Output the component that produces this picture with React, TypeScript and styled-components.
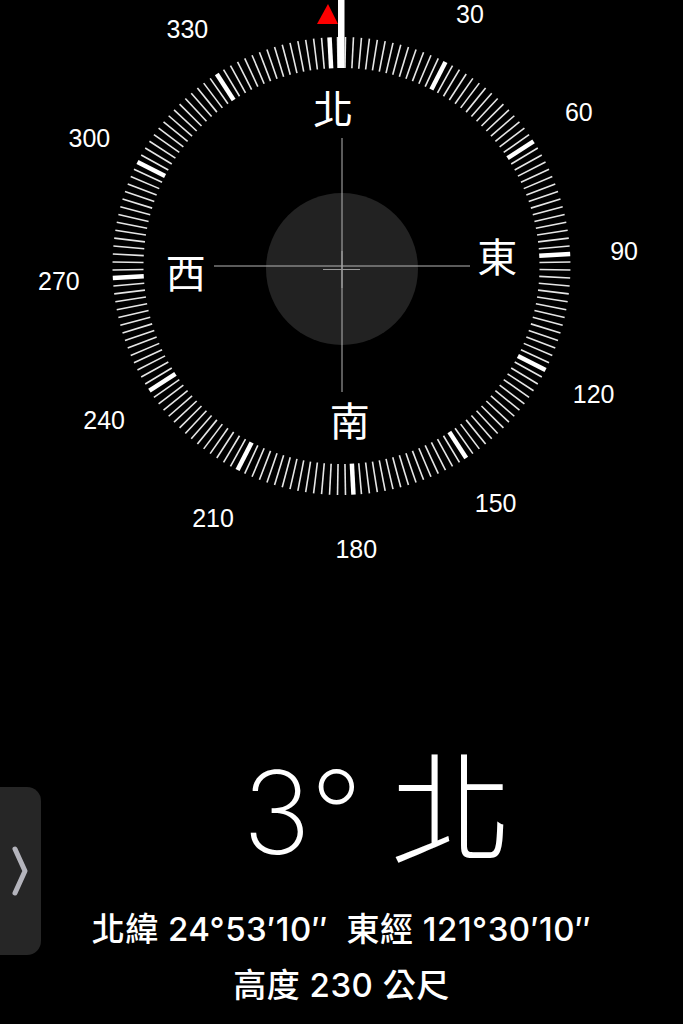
import * as React from "react";
import styled, { createGlobalStyle } from "styled-components";

const GlobalStyle = createGlobalStyle`
  html, body {
    margin: 0;
    padding: 0;
    background: #000;
  }
`;

const Screen = styled.main`
  position: relative;
  width: 683px;
  height: 1024px;
  background: #000;
  color: #fff;
  overflow: hidden;
  display: flex;
  flex-direction: column;
  align-items: center;
`;

const Dial = styled.svg`
  display: block;
  flex: none;
`;

const DegreeLabel = styled.text`
  font-family: "Liberation Sans", Arial, sans-serif;
  font-size: 25px;
  fill: #fff;
`;

const Cardinal = styled.text`
  font-family: "Noto Sans CJK TC", sans-serif;
  font-size: 40px;
  fill: #fff;
`;

const Heading = styled.div`
  display: flex;
  align-items: baseline;
  gap: 28px;
  margin-top: 167px;
  height: 117px;
  line-height: 117px;
  padding-left: 72px;
`;

const HeadingNumber = styled.span`
  font-family: Inter, "Liberation Sans", sans-serif;
  font-weight: 200;
  font-size: 115px;
`;

const HeadingDirection = styled.span`
  font-family: "Noto Sans CJK TC", sans-serif;
  font-weight: 200;
  font-size: 122px;
`;

const Coords = styled.div`
  margin-top: 42px;
  font-family: Inter, "Noto Sans CJK TC", sans-serif;
  font-weight: 500;
  font-size: 33px;
  letter-spacing: 0.5px;
  line-height: 56px;
  text-align: center;
`;

const SideTab = styled.button`
  position: absolute;
  left: -14px;
  top: 787px;
  width: 55px;
  height: 168px;
  border: none;
  border-radius: 14px;
  background: #262626;
  padding: 0 0 0 14px;
  display: flex;
  align-items: center;
  justify-content: center;
`;

const CX = 341.5;
const CY = 266;
const ROT = -3;

function polar(deg: number, r: number) {
  const a = ((deg + ROT) * Math.PI) / 180;
  return { x: CX + r * Math.sin(a), y: CY - r * Math.cos(a) };
}

const cardinals = [
  { deg: 0, label: "北" },
  { deg: 90, label: "東" },
  { deg: 180, label: "南" },
  { deg: 270, label: "西" },
];

function Compass() {
  const ticks = [];
  for (let d = 0; d < 360; d += 2) {
    const major = d % 30 === 0;
    const a = polar(d, 198);
    const b = polar(d, 229);
    ticks.push(
      <line
        key={d}
        x1={a.x}
        y1={a.y}
        x2={b.x}
        y2={b.y}
        stroke={major ? "#fff" : "#e6e6e6"}
        strokeWidth={major ? 4.5 : 1.6}
      />
    );
  }
  const labels = [];
  for (let d = 30; d < 360; d += 30) {
    const p = polar(d, 283);
    labels.push(
      <DegreeLabel key={d} x={p.x} y={p.y + 9} textAnchor="middle">
        {d}
      </DegreeLabel>
    );
  }
  return (
    <Dial width={683} height={575} viewBox="0 0 683 575">
      {ticks}
      {labels}
      {cardinals.map((c) => {
        const p = polar(c.deg, 156);
        return (
          <Cardinal key={c.label} x={p.x} y={p.y + 14} textAnchor="middle">
            {c.label}
          </Cardinal>
        );
      })}
      <circle cx={342} cy={269} r={76} fill="#222" />
      <line x1={342} y1={138} x2={342} y2={392} stroke="#b5b5b5" strokeWidth={1} />
      <line x1={214} y1={266} x2={470} y2={266} stroke="#b5b5b5" strokeWidth={1} />
      <line x1={323} y1={269.5} x2={360} y2={269.5} stroke="#9a9a9a" strokeWidth={1.2} />
      <line x1={342} y1={251} x2={342} y2={288} stroke="#9a9a9a" strokeWidth={1.2} />
      <rect x={338} y={0} width={6.5} height={68} fill="#fff" />
      <polygon points="328,4 338,24 317,24" fill="#f00" />
    </Dial>
  );
}

export default function App() {
  return (
    <Screen>
      <GlobalStyle />
      <Compass />
      <Heading>
        <HeadingNumber>3°</HeadingNumber>
        <HeadingDirection>北</HeadingDirection>
      </Heading>
      <Coords>
        <div>北緯 24°53′10″&nbsp; 東經 121°30′10″</div>
        <div>高度 230 公尺</div>
      </Coords>
      <SideTab aria-label="展開">
        <svg width="20" height="52" viewBox="0 0 20 52">
          <polyline
            points="4,4 14,26 4,48"
            fill="none"
            stroke="#b4b4bc"
            strokeWidth={5}
            strokeLinecap="round"
            strokeLinejoin="round"
          />
        </svg>
      </SideTab>
    </Screen>
  );
}
